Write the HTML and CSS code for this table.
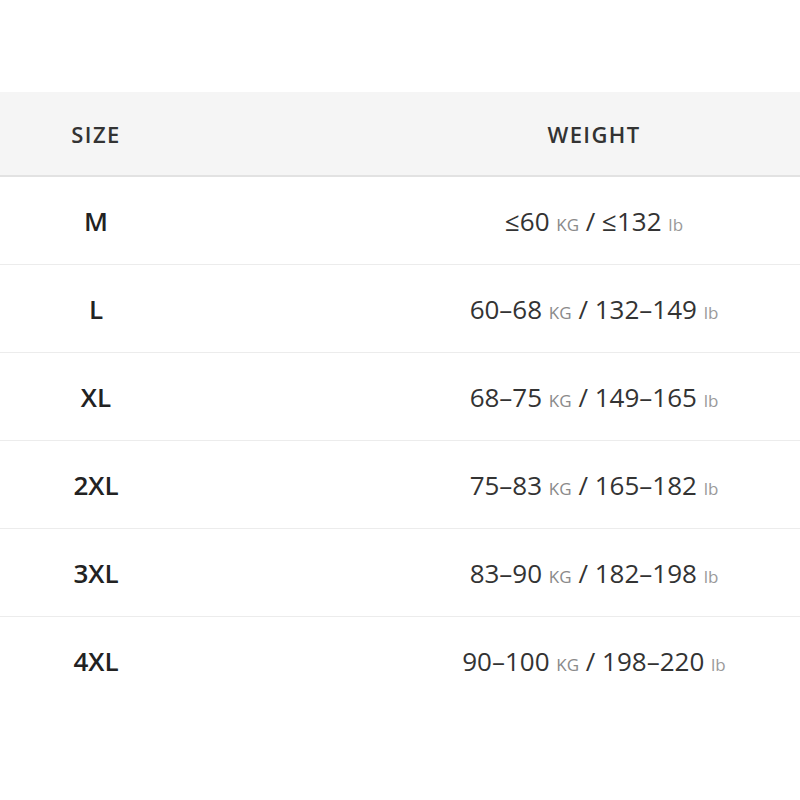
FILE: index.html
```html
<!DOCTYPE html>
<html>
<head>
<meta charset="utf-8">
<link rel="stylesheet" href="styles.css">
</head>
<body>
<div class="page">
  <table class="chart">
    <thead>
      <tr><th class="c-size">SIZE</th><th class="c-weight">WEIGHT</th></tr>
    </thead>
    <tbody>
      <tr><td class="c-size">M</td><td class="c-weight">≤60 <span class="u">KG</span> / ≤132 <span class="lb">lb</span></td></tr>
      <tr><td class="c-size">L</td><td class="c-weight">60–68 <span class="u">KG</span> / 132–149 <span class="lb">lb</span></td></tr>
      <tr><td class="c-size">XL</td><td class="c-weight">68–75 <span class="u">KG</span> / 149–165 <span class="lb">lb</span></td></tr>
      <tr><td class="c-size">2XL</td><td class="c-weight">75–83 <span class="u">KG</span> / 165–182 <span class="lb">lb</span></td></tr>
      <tr><td class="c-size">3XL</td><td class="c-weight">83–90 <span class="u">KG</span> / 182–198 <span class="lb">lb</span></td></tr>
      <tr><td class="c-size">4XL</td><td class="c-weight">90–100 <span class="u">KG</span> / 198–220 <span class="lb">lb</span></td></tr>
    </tbody>
  </table>
</div>
</body>
</html>
```

FILE: styles.css
```css
html, body {
  margin: 0;
  padding: 0;
  background: #fff;
}
body {
  font-family: "Open Sans", "Noto Sans", sans-serif;
  color: #2a2a2a;
  overflow: hidden;
}
.page {
  width: 800px;
  height: 800px;
  overflow: hidden;
  padding-top: 92px;
  box-sizing: border-box;
}
.chart {
  width: 996px;
  border-collapse: collapse;
  table-layout: fixed;
}
.c-size { width: 192px; }
.c-weight { width: 804px; }
.chart th {
  background: #f5f5f5;
  height: 83px;
  padding: 0;
  font-size: 22px;
  font-weight: 600;
  letter-spacing: 1.4px;
  color: #333;
  text-align: center;
  border-bottom: 2px solid #e2e2e2;
}
.chart td {
  height: 87px;
  padding: 0;
  text-align: center;
  border-bottom: 1px solid #ececec;
}
.chart tbody tr:last-child td {
  border-bottom: none;
}
.chart td.c-size {
  font-size: 26px;
  font-weight: 600;
  color: #222;
}
.chart td.c-weight {
  font-size: 26px;
  font-weight: 400;
  color: #333;
}
.u {
  font-size: 17px;
  color: #8a8a8a;
}
.lb {
  font-size: 17px;
  color: #9a9a9a;
}
```
